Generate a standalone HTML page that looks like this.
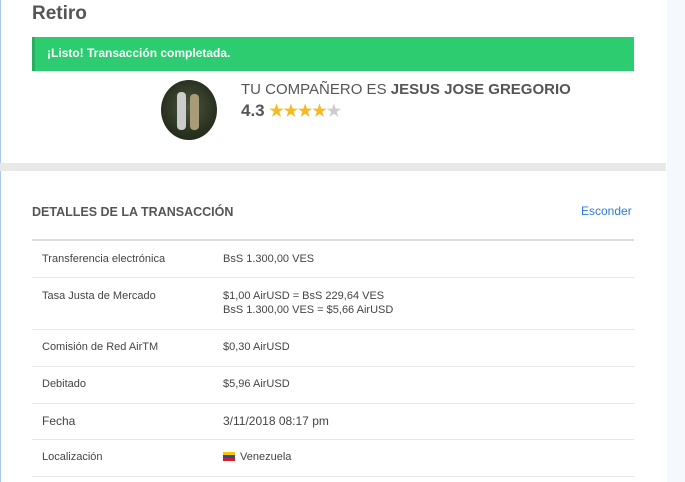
<!DOCTYPE html>
<html><head><meta charset="utf-8"><style>
body{margin:0;width:685px;height:482px;overflow:hidden;background:#f5f8fc;font-family:"Liberation Sans",sans-serif;position:relative}
.panel{position:absolute;left:0;top:0;width:666px;height:482px;background:#fff;border-left:1px solid #a9c8ee}
.sep{position:absolute;left:0;top:163px;width:666px;height:8px;background:#e8e8e8}
.abs{position:absolute;white-space:nowrap}
.row{position:absolute;left:32px;width:602px;border-top:1px solid #e6e6e6}
.l{position:absolute;left:42px;font-size:11px;color:#444}
.v{position:absolute;left:223px;font-size:11px;color:#444;line-height:14px}
</style></head><body>
<div class="panel"></div>
<div class="sep"></div>
<div class="abs" style="left:32px;top:3px;font-size:19px;font-weight:bold;color:#555">Retiro</div>
<div class="abs" style="left:32px;top:37px;width:602px;height:34px;background:#2ecc71;border-left:3px solid #27ae60;box-sizing:border-box"></div>
<div class="abs" style="left:47px;top:46px;font-size:12px;color:#fff;font-weight:bold">¡Listo! Transacción completada.</div>
<div class="abs" style="left:161px;top:80px;width:56px;height:60px;border-radius:50%;background:radial-gradient(circle at 50% 45%,#4d5540,#2a3320 60%,#1a2015)"></div>
<div class="abs" style="left:177px;top:92px;width:9px;height:38px;background:#ccc;border-radius:4px"></div>
<div class="abs" style="left:190px;top:94px;width:9px;height:36px;background:#a89c78;border-radius:4px"></div>
<div class="abs" style="left:241px;top:81px;font-size:15px;color:#555">TU COMPAÑERO ES <b>JESUS JOSE GREGORIO</b></div>
<div class="abs" style="left:241px;top:101px;font-size:17px;color:#555;font-weight:bold">4.3 <span style="color:#f5b921;font-size:16px">★★★★</span><span style="color:#ccc;font-size:16px">★</span></div>
<div class="abs" style="left:32px;top:205px;font-size:12.5px;color:#555;font-weight:bold">DETALLES DE LA TRANSACCIÓN</div>
<div class="abs" style="left:581px;top:204px;font-size:12px;color:#2a7be4">Esconder</div>
<div class="abs" style="left:32px;top:239px;width:602px;height:2px;background:#ddd"></div>
<div class="l" style="top:253px">Transferencia electrónica</div><div class="v" style="top:252px">BsS 1.300,00 VES</div>
<div class="row" style="top:277px"></div>
<div class="l" style="top:290px">Tasa Justa de Mercado</div><div class="v" style="top:289px">$1,00 AirUSD = BsS 229,64 VES<br>BsS 1.300,00 VES = $5,66 AirUSD</div>
<div class="row" style="top:329px"></div>
<div class="l" style="top:341px">Comisión de Red AirTM</div><div class="v" style="top:340px">$0,30 AirUSD</div>
<div class="row" style="top:366px"></div>
<div class="l" style="top:378px">Debitado</div><div class="v" style="top:377px">$5,96 AirUSD</div>
<div class="row" style="top:403px"></div>
<div class="l" style="top:414px;font-size:12px">Fecha</div><div class="v" style="top:414px;font-size:12px">3/11/2018 08:17 pm</div>
<div class="row" style="top:439px"></div>
<div class="l" style="top:451px">Localización</div>
<div class="abs" style="left:223px;top:452px;width:12px;height:9px;background:linear-gradient(#f5c800 33%,#1f4fa8 33% 66%,#d0202a 66%)"></div>
<div class="v" style="left:240px;top:450px">Venezuela</div>
<div class="row" style="top:476px"></div>
</body></html>
